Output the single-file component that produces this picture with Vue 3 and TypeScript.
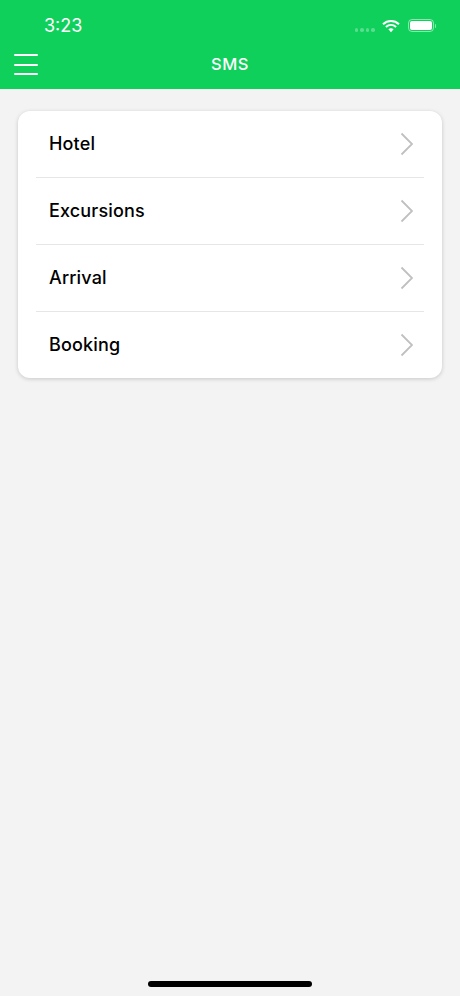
<script setup lang="ts">
const items: string[] = ['Hotel', 'Excursions', 'Arrival', 'Booking']
</script>

<template>
  <div class="screen">
    <header class="top">
      <div class="status">
        <span class="time">3:23</span>
        <div class="status-icons">
          <span class="dots"><i></i><i></i><i></i><i></i></span>
          <svg class="wifi" width="18" height="14" viewBox="0 0 18 14">
            <path d="M1 5.2C5.6 .9 12.4 .9 17 5.2" fill="none" stroke="#fff" stroke-width="2" />
            <path d="M3.9 8C6.9 5.3 11.1 5.3 14.1 8" fill="none" stroke="#fff" stroke-width="2" />
            <path d="M6.4 10.3L9 13.2L11.6 10.3C10 9 8 9 6.4 10.3Z" fill="#fff" />
          </svg>
          <span class="battery"><span class="level"></span></span>
          <span class="cap"></span>
        </div>
      </div>
      <div class="nav">
        <button class="menu" aria-label="Menu"><i></i><i></i><i></i></button>
        <h1 class="title">SMS</h1>
      </div>
    </header>

    <main class="content">
      <ul class="card">
        <li v-for="item in items" :key="item" class="row">
          <span class="label">{{ item }}</span>
          <svg class="chevron" width="14" height="24" viewBox="0 0 14 24">
            <path d="M2.5 1.5L13 12L2.5 22.5" fill="none" stroke="#c0c0c0" stroke-width="1.8" />
          </svg>
        </li>
      </ul>
    </main>

    <div class="home-wrap"><div class="home"></div></div>
  </div>
</template>

<style>
html, body { margin: 0; padding: 0; }
</style>

<style scoped>
.screen {
  width: 460px;
  height: 996px;
  background: #f3f3f3;
  display: flex;
  flex-direction: column;
  font-family: Inter, "Liberation Sans", sans-serif;
  overflow: hidden;
}
.top {
  background: #10d05c;
  height: 89px;
  color: #fff;
  flex: none;
}
.status {
  height: 44px;
  display: flex;
  align-items: center;
  justify-content: space-between;
  padding: 7px 24px 0 44px;
  box-sizing: border-box;
}
.time {
  font-size: 18px;
  font-weight: 400;
  line-height: 22px;
}
.status-icons {
  display: flex;
  align-items: center;
}
.dots {
  display: flex;
  gap: 2px;
  margin-right: 7px;
  margin-top: 9px;
}
.dots i {
  width: 3.5px;
  height: 3.5px;
  border-radius: 50%;
  background: rgba(255, 255, 255, 0.3);
}
.wifi {
  margin-right: 8px;
}
.battery {
  width: 26px;
  height: 13px;
  box-sizing: border-box;
  border: 1px solid rgba(255, 255, 255, 0.5);
  border-radius: 4px;
  padding: 1px;
  display: flex;
}
.level {
  flex: 1;
  background: #fff;
  border-radius: 2px;
}
.cap {
  width: 1.5px;
  height: 4px;
  margin-left: 1px;
  background: rgba(255, 255, 255, 0.5);
  border-radius: 0 1px 1px 0;
}
.nav {
  position: relative;
  height: 45px;
  display: flex;
  align-items: center;
  justify-content: center;
}
.title {
  margin: -6px 0 0;
  font-size: 16.5px;
  font-weight: 500;
  letter-spacing: 0.6px;
}
.menu {
  position: absolute;
  left: 14px;
  top: 10px;
  width: 24px;
  height: 21px;
  padding: 0;
  border: 0;
  background: none;
  display: flex;
  flex-direction: column;
  justify-content: space-between;
}
.menu i {
  display: block;
  height: 2px;
  background: #fff;
  border-radius: 1px;
}
.content {
  flex: 1;
  padding: 22.4px 18px 0;
}
.card {
  list-style: none;
  margin: 0;
  padding: 0 18px;
  background: #fff;
  border-radius: 12px;
  box-shadow: 0 1px 4px rgba(0, 0, 0, 0.18);
}
.row {
  height: 66.75px;
  box-sizing: border-box;
  display: flex;
  align-items: center;
  justify-content: space-between;
  padding: 0 11px 0 13px;
  border-bottom: 1px solid #e6e6e6;
}
.row:last-child {
  border-bottom: 0;
}
.label {
  font-size: 18px;
  font-weight: 500;
  color: #000;
  letter-spacing: 0.15px;
  margin-top: -1px;
}
.home-wrap {
  flex: none;
  height: 21px;
  display: flex;
  justify-content: center;
}
.home {
  width: 164px;
  height: 6px;
  margin-top: 6px;
  background: #000;
  border-radius: 3px;
}
</style>
